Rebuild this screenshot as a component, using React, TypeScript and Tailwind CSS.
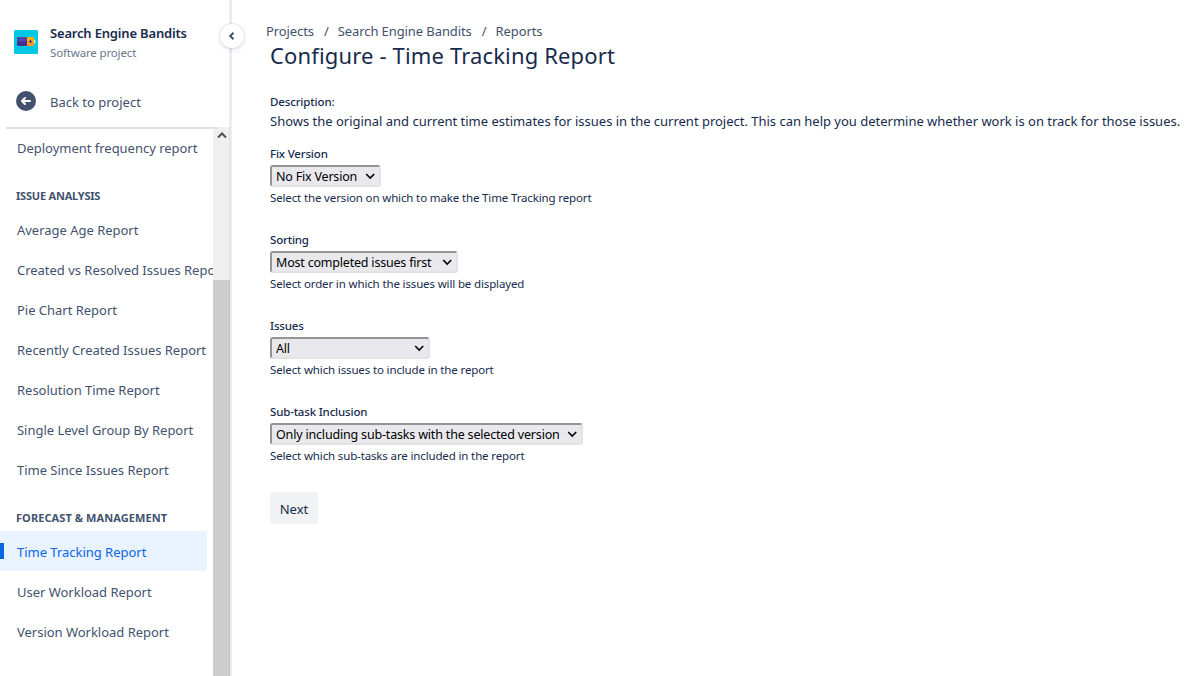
interface NavSection {
  title?: string
  titleClass?: string
  items: string[]
}

interface SelectFieldProps {
  id: string
  label: string
  value: string
  hint: string
  width: string
  valueClass: string
}

const sections: NavSection[] = [
  { items: ['Deployment frequency report'] },
  {
    title: 'ISSUE ANALYSIS',
    titleClass: 'tracking-[-0.2px]',
    items: [
      'Average Age Report',
      'Created vs Resolved Issues Report',
      'Pie Chart Report',
      'Recently Created Issues Report',
      'Resolution Time Report',
      'Single Level Group By Report',
      'Time Since Issues Report',
    ],
  },
  {
    title: 'FORECAST & MANAGEMENT',
    titleClass: 'tracking-[0.08px]',
    items: ['Time Tracking Report', 'User Workload Report', 'Version Workload Report'],
  },
]

const activeItem = 'Time Tracking Report'

const fields: SelectFieldProps[] = [
  {
    id: 'version',
    label: 'Fix Version',
    value: 'No Fix Version',
    hint: 'Select the version on which to make the Time Tracking report',
    width: 'w-[111px]',
    valueClass: 'tracking-[-0.2px]',
  },
  {
    id: 'sorting',
    label: 'Sorting',
    value: 'Most completed issues first',
    hint: 'Select order in which the issues will be displayed',
    width: 'w-[188px]',
    valueClass: 'tracking-[-0.2px]',
  },
  {
    id: 'issues',
    label: 'Issues',
    value: 'All',
    hint: 'Select which issues to include in the report',
    width: 'w-[160px]',
    valueClass: 'tracking-[-0.2px]',
  },
  {
    id: 'subtasks',
    label: 'Sub-task Inclusion',
    value: 'Only including sub-tasks with the selected version',
    hint: 'Select which sub-tasks are included in the report',
    width: 'w-[313px]',
    valueClass: 'tracking-[-0.18px]',
  },
]

function ProjectLogo() {
  return (
    <svg width="24" height="24" viewBox="0 0 24 24">
      <rect width="24" height="24" rx="1.5" fill="#00C7E5" />
      <rect x="3" y="7" width="10.5" height="9" rx="1" fill="#403294" />
      <path d="M4 7h9.5v4.5H3V8a1 1 0 0 1 1-1z" fill="#5243AA" />
      <path d="M13 7h6a1 1 0 0 1 1 1v7a1 1 0 0 1-1 1h-6z" fill="#FF991F" />
      <path d="M13 7h6a1 1 0 0 1 1 1v3.5h-7z" fill="#FFAB00" />
      <path d="M20 9.5q1.3 0 1.3 1v2q0 1-1.3 1z" fill="#DFF5F8" />
      <path d="M16.5 9.9v3.2M14.9 11.5h3.2" stroke="#403294" strokeWidth="1" />
    </svg>
  )
}

function SelectField({ id, label, value, hint, width, valueClass }: SelectFieldProps) {
  return (
    <div className="flex h-[86px] flex-col items-start">
      <label htmlFor={id} className="h-[19px] text-[11.5px] leading-4 font-medium tracking-[-0.18px]">
        {label}
      </label>
      <div className={`relative h-[23px] ${width}`}>
        <select
          id={id}
          className={`block h-[22px] w-full appearance-none rounded-[3px] border-2 border-t-[#949496] border-r-[#e3e3e3] border-b-[#e3e3e3] border-l-[#949496] bg-[#e9e9ed] pt-px pl-1 text-[12.5px] leading-[18px] text-black ${valueClass}`}
        >
          <option>{value}</option>
        </select>
        <svg className="absolute top-[7px] right-[5px]" width="11" height="8" viewBox="0 0 11 8">
          <path d="M1.2 2l4 4 4-4" fill="none" stroke="#000" strokeWidth="1.6" />
        </svg>
      </div>
      <p className="mt-[2px] text-[11.5px] leading-4 tracking-[-0.14px] whitespace-nowrap">{hint}</p>
    </div>
  )
}

function Sidebar() {
  return (
    <aside className="relative flex h-full w-[232px] shrink-0 flex-col border-r-2 border-[#ebecf0] text-[#42526e]">
      <header className="flex h-[76px] gap-3 pt-[25px] pl-[14px]">
        <div className="pt-[5px]">
          <ProjectLogo />
        </div>
        <div className="whitespace-nowrap">
          <h2 className="text-[13px] leading-[17px] font-semibold tracking-[-0.18px] text-[#172b4d]">
            Search Engine Bandits
          </h2>
          <p className="pt-[3px] text-[11.5px] leading-4 tracking-[-0.15px] text-[#6b778c]">Software project</p>
        </div>
      </header>
      <a className="flex h-[51px] items-center gap-[14px] pl-4 text-[13px]">
        <svg className="-mt-px" width="20" height="20" viewBox="0 0 20 20">
          <circle cx="10" cy="10" r="10" fill="#42526e" />
          <path
            d="M14 10H6.2M9 7L6 10l3 3"
            fill="none"
            stroke="#fff"
            strokeWidth="2"
            strokeLinecap="round"
            strokeLinejoin="round"
          />
        </svg>
        <span className="pt-[2px]">Back to project</span>
      </a>
      <div className="relative z-10 -mb-0.5 ml-1.5 h-0.5 w-[212px] shrink-0 bg-[#dfe1e6]" />
      <div className="flex min-h-0 flex-1">
        <nav className="w-[213px] overflow-hidden">
          {sections.map((section, i) => (
            <div key={i} className="mb-2">
              {section.title && (
                <h3
                  className={`flex h-[34px] items-center pt-[8px] pl-4 text-[11px] font-bold ${section.titleClass}`}
                >
                  {section.title}
                </h3>
              )}
              {section.items.map((item) => (
                <div
                  key={item}
                  className={`flex h-10 w-[207px] items-center rounded-r-[3px] text-[13px] whitespace-nowrap ${
                    item === activeItem ? 'bg-[#e9f2ff] text-[#0c66e4]' : ''
                  }`}
                >
                  <span className={`mr-[13px] h-4 w-1 shrink-0 ${item === activeItem ? 'bg-[#0c66e4]' : ''}`} />
                  <span className="pt-[3px] tracking-[-0.02px]">{item}</span>
                </div>
              ))}
            </div>
          ))}
        </nav>
        <div className="w-[17px] bg-[#f0f0f0]">
          <div className="flex h-[153px] pt-1 pl-[3.5px]">
            <svg width="10" height="8" viewBox="0 0 10 8">
              <path d="M1 6.5l4-4 4 4" fill="none" stroke="#505050" strokeWidth="2" />
            </svg>
          </div>
          <div className="h-full bg-[#cdcdcd]" />
        </div>
      </div>
      <div className="absolute inset-y-0 right-0 w-px bg-[#091e42]/8" />
      <button className="absolute top-6 -right-[14px] z-20 flex size-6 items-center justify-center rounded-full bg-white shadow-[0_0_0_1px_rgba(9,30,66,0.08),0_2px_4px_1px_rgba(9,30,66,0.08)]">
        <svg width="8" height="10" viewBox="0 0 8 10">
          <path d="M5.5 1.7L2.2 5l3.3 3.3" fill="none" stroke="#42526e" strokeWidth="2" />
        </svg>
      </button>
    </aside>
  )
}

export default function App() {
  return (
    <div className="flex h-[676px] w-[1193px] overflow-hidden bg-white font-['Noto_Sans',sans-serif] text-[#172b4d]">
      <Sidebar />
      <main className="flex-1 pt-[22px] pl-[38px]">
        <div className="-ml-1 flex gap-[9px] text-[13px] leading-[18px] tracking-[-0.09px] text-[#42526e]">
          <a>Projects</a>
          <span className="pl-px">/</span>
          <a>Search Engine Bandits</a>
          <span className="pl-px">/</span>
          <a>Reports</a>
        </div>
        <h1 className="-mt-px text-[22px] leading-8 tracking-[0.15px] whitespace-nowrap">
          Configure - Time Tracking Report
        </h1>
        <h4 className="mt-[23px] text-[11.5px] leading-4 font-medium tracking-[-0.15px]">Description:</h4>
        <p className="mt-px text-[13px] leading-5 tracking-[-0.012px] whitespace-nowrap">
          Shows the original and current time estimates for issues in the current project. This can help you determine
          whether work is on track for those issues.
        </p>
        <form className="mt-[15px]">
          {fields.map((field) => (
            <SelectField key={field.id} {...field} />
          ))}
          <button
            type="button"
            className="mt-[2px] flex h-8 w-12 items-center justify-center rounded-[3px] bg-[#f1f2f4] pt-[3px] text-[13px]"
          >
            Next
          </button>
        </form>
      </main>
    </div>
  )
}
